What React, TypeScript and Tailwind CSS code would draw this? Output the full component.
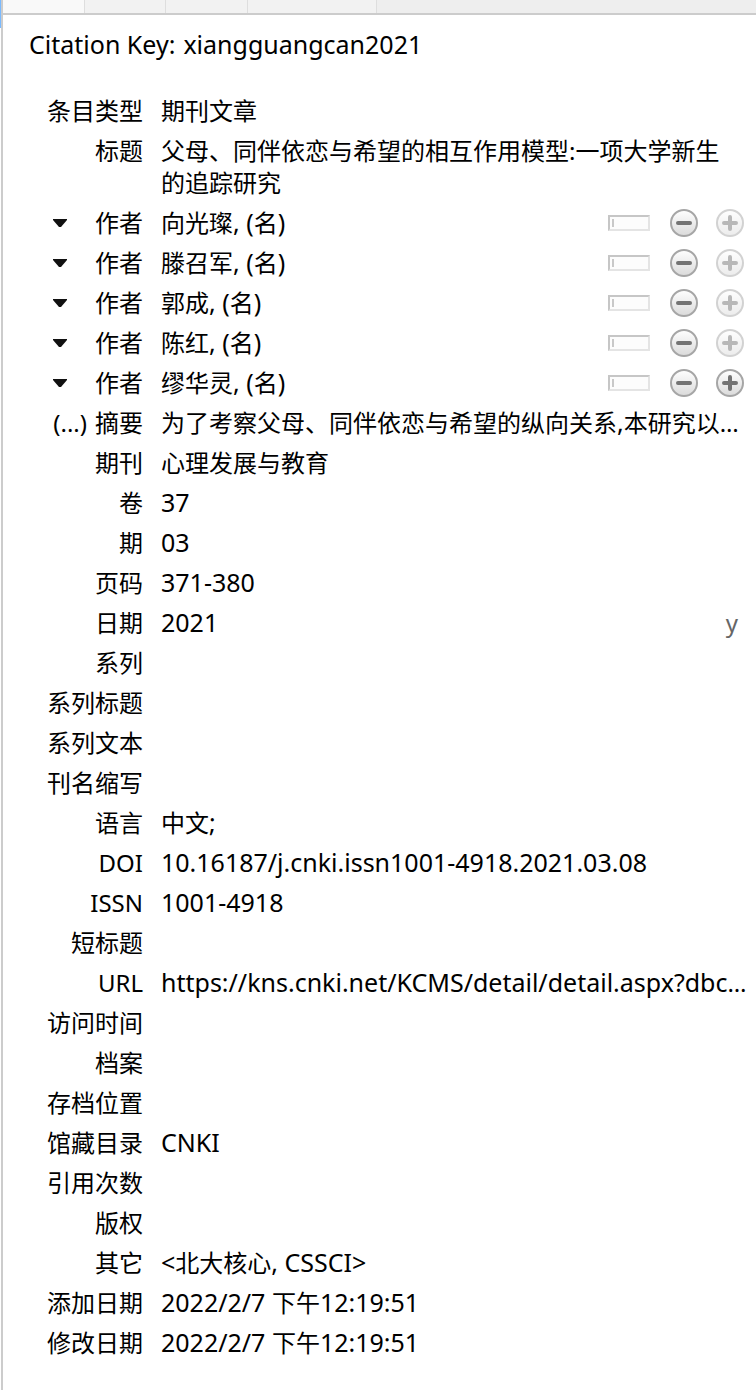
import type { ReactNode } from "react";

type Field = { label: string; value?: string; wrap?: boolean; note?: string; expandable?: boolean };

const leading: Field[] = [
  { label: "条目类型", value: "期刊文章" },
  { label: "标题", value: "父母、同伴依恋与希望的相互作用模型:一项大学新生的追踪研究", wrap: true },
];

const authors = ["向光璨", "滕召军", "郭成", "陈红", "缪华灵"];

const trailing: Field[] = [
  { label: "摘要", value: "为了考察父母、同伴依恋与希望的纵向关系,本研究以…", expandable: true },
  { label: "期刊", value: "心理发展与教育" },
  { label: "卷", value: "37" },
  { label: "期", value: "03" },
  { label: "页码", value: "371-380" },
  { label: "日期", value: "2021", note: "y" },
  { label: "系列" },
  { label: "系列标题" },
  { label: "系列文本" },
  { label: "刊名缩写" },
  { label: "语言", value: "中文;" },
  { label: "DOI", value: "10.16187/j.cnki.issn1001-4918.2021.03.08" },
  { label: "ISSN", value: "1001-4918" },
  { label: "短标题" },
  { label: "URL", value: "https://kns.cnki.net/KCMS/detail/detail.aspx?dbc…" },
  { label: "访问时间" },
  { label: "档案" },
  { label: "存档位置" },
  { label: "馆藏目录", value: "CNKI" },
  { label: "引用次数" },
  { label: "版权" },
  { label: "其它", value: "<北大核心, CSSCI>" },
  { label: "添加日期", value: "2022/2/7 下午12:19:51" },
  { label: "修改日期", value: "2022/2/7 下午12:19:51" },
];

// Latin runs are set one pixel larger than the Chinese text around them.
function Mixed({ text }: { text: string }) {
  return text.split(/([\x20-\x7e]+)/).map((run, i) =>
    i % 2 === 1 ? (
      <span key={i} className="text-[25px] leading-none">
        {run}
      </span>
    ) : (
      run
    ),
  );
}

function Row({ label, lead, children }: { label: string; lead?: ReactNode; children?: ReactNode }) {
  return (
    <div className="flex min-h-10 gap-[18px] py-1">
      <dt className="flex w-[140px] shrink-0 items-start justify-end whitespace-nowrap">
        {lead}
        {label}
      </dt>
      <dd className="flex min-w-0 flex-1 items-start">{children}</dd>
    </div>
  );
}

function FieldRow({ field }: { field: Field }) {
  return (
    <Row
      label={field.label}
      lead={field.expandable ? <button type="button" className="mr-2">(...)</button> : null}
    >
      <span className={field.wrap ? "flex-1 pr-7" : "flex-1 whitespace-nowrap"}>
        {field.wrap ? field.value : <Mixed text={field.value ?? ""} />}
      </span>
      {field.note && <span className="pr-[18px] text-[#666666]">{field.note}</span>}
    </Row>
  );
}

function RoundIcon({ id, plus }: { id: string; plus?: boolean }) {
  return (
    <svg viewBox="0 0 28 28" className="size-7" aria-hidden="true">
      <defs>
        <linearGradient id={id} x1="0" y1="0" x2="0" y2="1">
          <stop offset="0" stopColor="#ffffff" />
          <stop offset="1" stopColor="#dadada" />
        </linearGradient>
      </defs>
      <circle cx="14" cy="14" r="13" fill={`url(#${id})`} stroke="#a6a6a6" strokeWidth="2" />
      <path
        d={plus ? "M8 14H20M14 8V20" : "M8 14H20"}
        stroke="#737373"
        strokeWidth="4"
        strokeLinecap="round"
      />
    </svg>
  );
}

function AuthorRow({ name, index, last }: { name: string; index: number; last: boolean }) {
  return (
    <Row
      label="作者"
      lead={
        <button type="button" aria-label="选择创作者类型" className="mr-7 flex h-8 items-center">
          <svg viewBox="0 0 14 8" className="h-2 w-3.5" aria-hidden="true">
            <path d="M0 0H14V1L8 8H6L0 1Z" fill="#111111" />
          </svg>
        </button>
      }
    >
      <span className="flex-1 whitespace-nowrap">
        <Mixed text={`${name}, (名)`} />
      </span>
      <div className="flex h-8 items-center gap-[18px] pr-3">
        <button type="button" aria-label="切换为单字段" className="mr-[2px]">
          <svg viewBox="0 0 42 16" className="h-4 w-[42px]" aria-hidden="true">
            <path d="M0 0H42V16H0Z" fill="#e4e4e4" />
            <path d="M0 0H42L40 2H2V14L0 16Z" fill="#c6c6c6" />
            <path d="M2 2H40V14H2Z" fill="#fcfcfc" />
            <path d="M4 4H6V12H4Z" fill="#c8c8c8" />
          </svg>
        </button>
        <button type="button" aria-label="删除作者">
          <RoundIcon id={`remove-${index}`} />
        </button>
        <button type="button" aria-label="添加作者" disabled={!last} className="disabled:opacity-50">
          <RoundIcon id={`add-${index}`} plus />
        </button>
      </div>
    </Row>
  );
}

export default function App() {
  return (
    <div className="flex min-h-screen bg-white font-['Noto_Sans','Noto_Sans_CJK_SC',sans-serif] text-2xl/8 text-black">
      <div className="h-7 w-px bg-[#7abaff]" />
      <div className="min-w-0 flex-1 border-l-2 border-[#cccccc]">
        <div className="flex h-[15px] border-b-2 border-[#cccccc] bg-[#eeeeee]">
          <div className="w-[82px] border-r border-[#dedede] bg-[#f9f9f9]" />
          <div className="w-[81px] border-r border-[#dedede] bg-[#f2f2f2]" />
          <div className="w-[82px] border-r border-[#dedede] bg-[#f2f2f2]" />
          <div className="w-[129px] border-r border-[#dedede] bg-[#f2f2f2]" />
        </div>
        <main className="pt-[13px] pb-6">
          <p className="mb-[31px] flex gap-2 pl-[26px] text-[25px]">
            <span>Citation Key:</span>
            <span>xiangguangcan2021</span>
          </p>
          <dl>
            {leading.map((field) => (
              <FieldRow key={field.label} field={field} />
            ))}
            {authors.map((name, i) => (
              <AuthorRow key={name} name={name} index={i} last={i === authors.length - 1} />
            ))}
            {trailing.map((field) => (
              <FieldRow key={field.label} field={field} />
            ))}
          </dl>
        </main>
      </div>
    </div>
  );
}
